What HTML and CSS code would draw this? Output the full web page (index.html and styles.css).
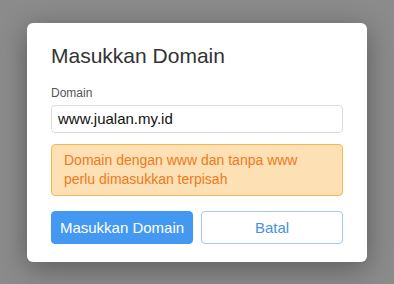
FILE: index.html
```html
<!DOCTYPE html>
<html lang="en">
<head>
  <meta charset="UTF-8" />
  <title>Masukkan Domain</title>
  <link rel="stylesheet" href="styles.css">
</head>
<body>
  <div class="modal">
    <h2 class="modal-title">Masukkan Domain</h2>

    <label class="field-label" for="domain">Domain</label>
    <input type="text" id="domain" class="field-input" value="www.jualan.my.id" />

    <div class="alert-warning">
      Domain dengan www dan tanpa www perlu dimasukkan terpisah
    </div>

    <div class="actions">
      <button class="btn btn-primary">Masukkan Domain</button>
      <button class="btn btn-outline">Batal</button>
    </div>
  </div>
</body>
</html>
```

FILE: styles.css
```css
html, body {
  height: 100%;
}

body {
  margin: 0;
  font-family: 'Liberation Sans', Arial, sans-serif;
  background: #8b8b8b;
  display: flex;
  justify-content: center;
  align-items: center;
}

.modal {
  box-sizing: border-box;
  width: 340px;
  background: #fff;
  border-radius: 6px;
  padding: 21px 24px 18px;
  display: flex;
  flex-direction: column;
  box-shadow: 0 6px 28px rgba(0, 0, 0, 0.35);
}

.modal-title {
  margin: 0 0 18px;
  font-size: 21px;
  font-weight: normal;
  line-height: 24px;
  color: #333;
}

.field-label {
  font-size: 12px;
  line-height: 14px;
  color: #555;
  margin-bottom: 5px;
}

.field-input {
  box-sizing: border-box;
  height: 28px;
  padding: 0 6px;
  border: 1px solid #dcdcdc;
  border-radius: 4px;
  font-family: inherit;
  font-size: 15px;
  color: #111;
  outline: none;
}

.alert-warning {
  margin-top: 11px;
  padding: 6px 12px;
  background: #fde0b3;
  border: 1px solid #f9b650;
  border-radius: 4px;
  color: #ee7a22;
  font-size: 14px;
  line-height: 19px;
}

.actions {
  display: flex;
  gap: 8px;
  margin-top: 15px;
}

.btn {
  flex: 1;
  height: 33px;
  border-radius: 4px;
  font-family: inherit;
  font-size: 15px;
  cursor: pointer;
}

.btn-primary {
  background: #4399f1;
  border: 1px solid #4399f1;
  color: #fff;
}

.btn-outline {
  background: #fff;
  border: 1px solid #a3c9f5;
  color: #4a90e2;
}
```
